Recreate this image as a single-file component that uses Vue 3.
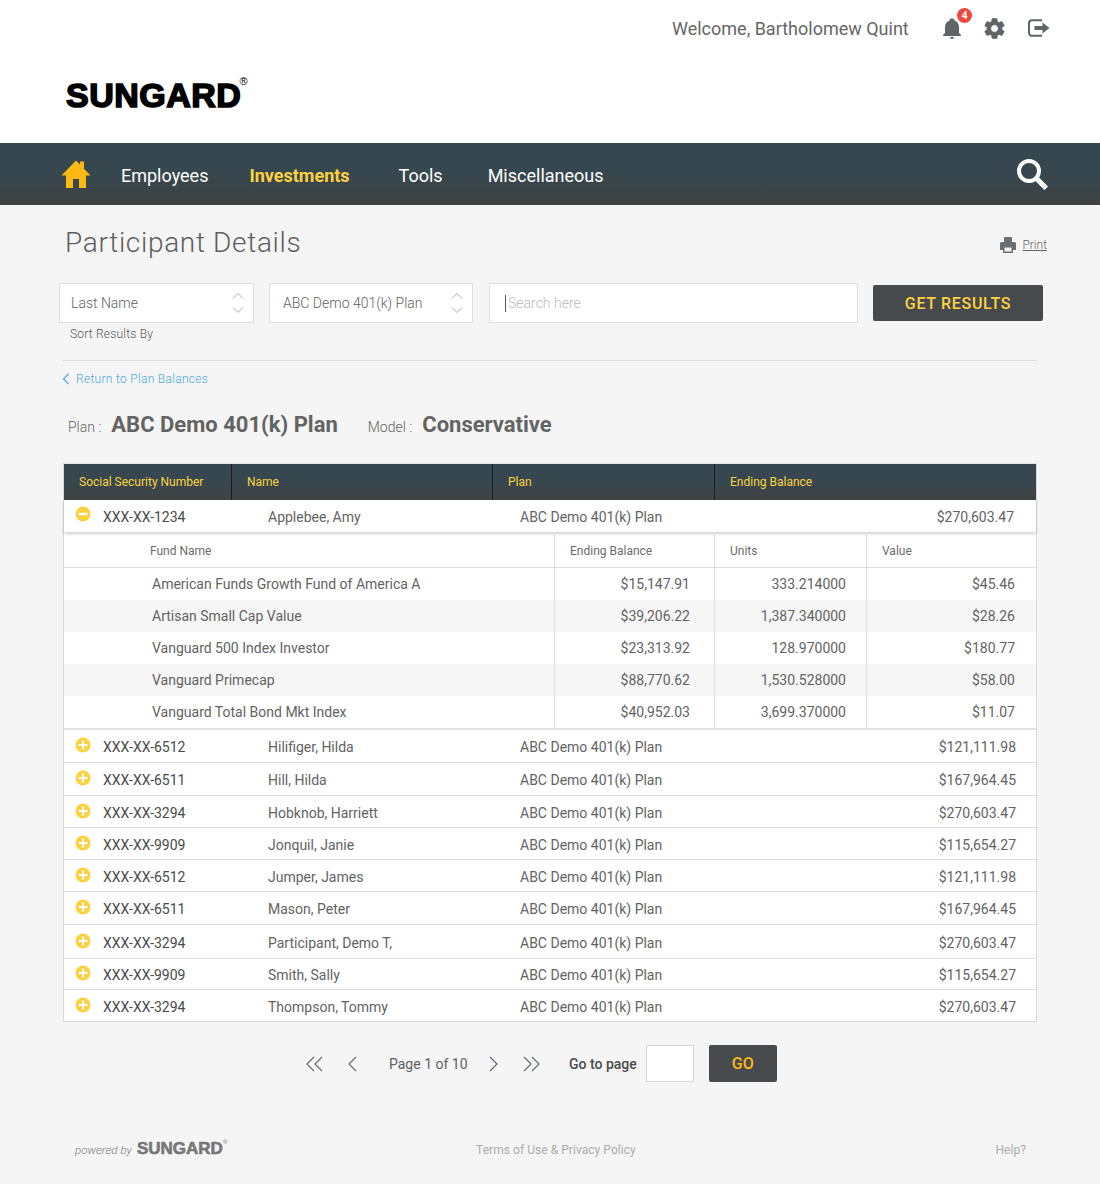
<template>
  <div class="page">
    <header class="top">
      <div class="user-bar">
        <span class="welcome">Welcome, Bartholomew Quint</span>
        <span class="bell">
          <svg width="24" height="26" viewBox="0 0 24 24"><path fill="#5f6467" d="M12 23c1.100 0 2-.9 2-2h-4c0 1.100.9 2 2 2zm7-6v-6c0-3.070-1.630-5.640-4.500-6.320V4c0-.83-.67-1.500-2.500-1.500S9.500 3.170 9.500 4v.68C6.640 5.360 5 7.920 5 11v6l-2 2v1h18v-1l-2-2z"/></svg>
          <b class="badge">4</b>
        </span>
        <svg class="gear" width="25" height="25" viewBox="0 0 24 24"><path fill="#5f6467" stroke="#5f6467" stroke-width=".6" d="M19.140 12.940c.04-.3.06-.61.06-.94 0-.32-.02-.64-.07-.94l2.030-1.580c.18-.14.23-.41.12-.61l-1.920-3.320c-.12-.22-.37-.29-.59-.22l-2.390.96c-.5-.38-1.030-.7-1.620-.94l-.36-2.540c-.04-.24-.24-.41-.48-.41h-3.840c-.24 0-.43.17-.47.41l-.36 2.540c-.59.24-1.130.57-1.620.94l-2.390-.96c-.22-.08-.47 0-.59.22L2.740 8.870c-.12.21-.08.47.12.61l2.030 1.580c-.05.3-.09.63-.09.94s.02.64.07.94l-2.030 1.580c-.18.14-.23.41-.12.61l1.920 3.320c.12.22.37.29.59.22l2.390-.96c.5.38 1.030.7 1.620.94l.36 2.540c.05.24.24.41.48.41h3.840c.24 0 .44-.17.47-.41l.36-2.540c.59-.24 1.130-.56 1.620-.94l2.390.96c.22.08.47 0 .59-.22l1.920-3.320c.12-.22.07-.47-.12-.61l-2.010-1.580zM12 15.600c-1.980 0-3.600-1.620-3.600-3.600s1.620-3.600 3.600-3.600 3.600 1.620 3.600 3.600-1.620 3.600-3.600 3.600z"/></svg>
        <svg class="exit" width="22" height="18" viewBox="0 0 22 18">
          <path fill="none" stroke="#5f6467" stroke-width="2" d="M14 1.200H4A3 3 0 0 0 1 4.200v9.600a3 3 0 0 0 3 3h10"/>
          <path fill="#5f6467" d="M6.500 7h8V3.500L21.500 9l-7 5.500V11h-8z"/>
        </svg>
      </div>
      <div class="logo">SUNGARD<sup>®</sup></div>
    </header>

    <nav class="nav">
      <svg class="home" width="30" height="30" viewBox="0 0 30 30"><path fill="#fdb913" d="M0.500 16.500 15 1.500l4 4V2.500h4V9.800l6.500 6.700H25V29h-7V20h-6v9H5V16.500z"/></svg>
      <a class="nav-link employees">Employees</a>
      <a class="nav-link active">Investments</a>
      <a class="nav-link tools">Tools</a>
      <a class="nav-link misc">Miscellaneous</a>
      <svg class="search" width="32" height="32" viewBox="0 0 32 32">
        <circle cx="13" cy="13" r="10" fill="none" stroke="#fff" stroke-width="4"/>
        <path d="M21 21 28.500 28.500" stroke="#fff" stroke-width="5" stroke-linecap="square"/>
      </svg>
    </nav>

    <main>
      <div class="title-row">
        <h1>Participant Details</h1>
        <span class="print">
          <svg width="16" height="16" viewBox="0 0 16 16">
            <path fill="#6b7074" d="M4 0h8v5h2.500A1.500 1.500 0 0 1 16 6.500V13h-3v3H3v-3H0V6.500A1.500 1.500 0 0 1 1.500 5H4z"/>
            <path fill="#f5f5f5" d="M4.500 10.500h7V14.500h-7z"/>
          </svg>
          <u>Print</u>
        </span>
      </div>

      <div class="filters">
        <div class="sort-col">
          <div class="box sel sel-a">
            <span>Last Name</span>
            <svg width="12" height="22" viewBox="0 0 12 22"><path d="M1 6.500 6 1.500l5 5M1 15.500l5 5 5-5" fill="none" stroke="#aaa" stroke-width="1"/></svg>
          </div>
          <div class="hint">Sort Results By</div>
        </div>
        <div class="box sel sel-b">
          <span>ABC Demo 401(k) Plan</span>
          <svg width="12" height="22" viewBox="0 0 12 22"><path d="M1 6.500 6 1.500l5 5M1 15.500l5 5 5-5" fill="none" stroke="#aaa" stroke-width="1"/></svg>
        </div>
        <div class="box searchbox"><i class="caret"></i><span>Search here</span></div>
        <button class="btn get">GET RESULTS</button>
      </div>

      <div class="rule"></div>

      <a class="back">
        <svg width="8" height="12" viewBox="0 0 8 12"><path d="M6.500 1 1.500 6l5 5" fill="none" stroke="#4aa8e0" stroke-width="1.200"/></svg>
        Return to Plan Balances
      </a>

      <div class="plan-line">
        <span class="lbl">Plan :</span><strong class="plan-name">ABC Demo 401(k) Plan</strong>
        <span class="lbl model">Model :</span><strong>Conservative</strong>
      </div>

      <section class="table">
        <div class="thead">
          <div v-for="h in headers" :key="h">{{ h }}</div>
        </div>

        <div class="row open">
          <svg class="toggle" width="16" height="16" viewBox="0 0 16 16"><circle cx="8" cy="8" r="7.500" fill="#fdd23e"/><rect x="3.500" y="6.800" width="9" height="2.400" fill="#fff"/></svg>
          <span class="ssn">XXX-XX-1234</span>
          <span class="name">Applebee, Amy</span>
          <span class="plan">ABC Demo 401(k) Plan</span>
          <span class="amt first">$270,603.47</span>
        </div>

        <div class="funds">
          <div class="fund-head">
            <div class="fn">Fund Name</div>
            <div>Ending Balance</div>
            <div>Units</div>
            <div>Value</div>
          </div>
          <div v-for="f in funds" :key="f.name" class="fund-row">
            <div class="fn">{{ f.name }}</div>
            <div class="num">{{ f.bal }}</div>
            <div class="num units">{{ f.units }}</div>
            <div class="num val">{{ f.val }}</div>
          </div>
        </div>

        <div v-for="r in rows" :key="r.name" class="row closed" :style="{ height: r.h + 'px' }">
          <svg class="toggle" width="16" height="16" viewBox="0 0 16 16"><circle cx="8" cy="8" r="7.500" fill="#fdd23e"/><path d="M3.500 8h9M8 3.500v9" stroke="#fff" stroke-width="2.200"/></svg>
          <span class="ssn">{{ r.ssn }}</span>
          <span class="name">{{ r.name }}</span>
          <span class="plan">ABC Demo 401(k) Plan</span>
          <span class="amt">{{ r.amt }}</span>
        </div>
      </section>

      <div class="pager">
        <svg class="p1" width="17" height="16" viewBox="0 0 17 16"><path d="M8 1 1 8l7 7M16 1 9 8l7 7" fill="none" stroke="#5d6c76" stroke-width="1.200"/></svg>
        <svg class="p2" width="9" height="16" viewBox="0 0 9 16"><path d="M8 1 1 8l7 7" fill="none" stroke="#5d6c76" stroke-width="1.200"/></svg>
        <span class="page-no">Page 1 of 10</span>
        <svg class="p3" width="9" height="16" viewBox="0 0 9 16"><path d="M1 1l7 7-7 7" fill="none" stroke="#5d6c76" stroke-width="1.200"/></svg>
        <svg class="p4" width="17" height="16" viewBox="0 0 17 16"><path d="M1 1l7 7-7 7M9 1l7 7-7 7" fill="none" stroke="#5d6c76" stroke-width="1.200"/></svg>
        <b class="goto">Go to page</b>
        <div class="page-input"></div>
        <button class="btn go">GO</button>
      </div>
    </main>

    <footer class="foot">
      <div class="powered"><em>powered by</em><span class="logo small">SUNGARD<sup>®</sup></span></div>
      <a class="terms">Terms of Use &amp; Privacy Policy</a>
      <a class="help">Help?</a>
    </footer>
  </div>
</template>

<script setup>
const headers = ['Social Security Number', 'Name', 'Plan', 'Ending Balance']

const funds = [
  { name: 'American Funds Growth Fund of America A', bal: '$15,147.91', units: '333.214000', val: '$45.46' },
  { name: 'Artisan Small Cap Value', bal: '$39,206.22', units: '1,387.340000', val: '$28.26' },
  { name: 'Vanguard 500 Index Investor', bal: '$23,313.92', units: '128.970000', val: '$180.77' },
  { name: 'Vanguard Primecap', bal: '$88,770.62', units: '1,530.528000', val: '$58.00' },
  { name: 'Vanguard Total Bond Mkt Index', bal: '$40,952.03', units: '3,699.370000', val: '$11.07' }
]

const rows = [
  { ssn: 'XXX-XX-6512', name: 'Hilifiger, Hilda', amt: '$121,111.98', h: 33 },
  { ssn: 'XXX-XX-6511', name: 'Hill, Hilda', amt: '$167,964.45', h: 33 },
  { ssn: 'XXX-XX-3294', name: 'Hobknob, Harriett', amt: '$270,603.47', h: 32 },
  { ssn: 'XXX-XX-9909', name: 'Jonquil, Janie', amt: '$115,654.27', h: 32 },
  { ssn: 'XXX-XX-6512', name: 'Jumper, James', amt: '$121,111.98', h: 32 },
  { ssn: 'XXX-XX-6511', name: 'Mason, Peter', amt: '$167,964.45', h: 33 },
  { ssn: 'XXX-XX-3294', name: 'Participant, Demo T,', amt: '$270,603.47', h: 34 },
  { ssn: 'XXX-XX-9909', name: 'Smith, Sally', amt: '$115,654.27', h: 31 },
  { ssn: 'XXX-XX-3294', name: 'Thompson, Tommy', amt: '$270,603.47', h: 31 }
]
</script>

<style>
html, body {
  margin: 0;
  background: #f5f5f5;
}
</style>

<style scoped>
.page {
  width: 1100px;
  height: 1184px;
  overflow: hidden;
  background: #f5f5f5;
  font-family: Roboto, "Liberation Sans", sans-serif;
  color: #5a5a5a;
}

.top {
  height: 143px;
  background: #fff;
  overflow: hidden;
}

.user-bar {
  display: flex;
  align-items: center;
  height: 56px;
  padding-left: 672px;
}

.welcome {
  font-size: 18px;
  color: #666;
  width: 268px;
}

.bell {
  position: relative;
  display: flex;
  width: 24px;
}

.badge {
  position: absolute;
  left: 17px;
  top: -7px;
  width: 15px;
  height: 15px;
  border-radius: 50%;
  background: #f0483e;
  color: #fff;
  font-size: 10px;
  line-height: 15px;
  text-align: center;
}

.gear {
  margin-left: 18px;
}

.exit {
  margin-left: 21px;
  margin-top: -1px;
}

.logo {
  font-family: "Liberation Sans", Arial, sans-serif;
  font-weight: 700;
  font-size: 34px;
  line-height: 34px;
  color: #000;
  -webkit-text-stroke: 1.6px #000;
  letter-spacing: .5px;
  margin: 22px 0 0 66px;
  white-space: nowrap;
}

.logo sup {
  margin-left: -2px;
  font-size: 11px;
  font-weight: 400;
  -webkit-text-stroke: 0;
  vertical-align: 22px;
  line-height: 0;
}

.nav {
  display: flex;
  align-items: center;
  height: 62px;
  padding-left: 61px;
  background: linear-gradient(#37474f 0%, #37474f 50%, #414141 100%);
  color: #fff;
  font-size: 18px;
}

.nav-link {
  white-space: nowrap;
  padding-top: 2px;
}

.employees {
  margin-left: 30px;
}

.active {
  margin-left: 41px;
  font-weight: 700;
  color: #fdd23e;
}

.tools {
  margin-left: 49px;
}

.misc {
  margin-left: 45px;
}

.search {
  margin-left: auto;
  margin-right: 52px;
}

.title-row {
  display: flex;
  align-items: center;
  justify-content: space-between;
  height: 34px;
  margin-top: 20px;
  padding: 0 53px 0 65px;
}

h1 {
  margin: 0;
  font-size: 28px;
  font-weight: 300;
  letter-spacing: .67px;
  color: #5e5e5e;
}

.print {
  display: flex;
  align-items: center;
  gap: 6px;
  font-size: 12px;
  font-weight: 300;
  color: #666;
  margin-top: 5px;
}

.filters {
  display: flex;
  align-items: flex-start;
  margin-top: 24px;
  padding-left: 59px;
}

.box {
  box-sizing: border-box;
  height: 40px;
  background: #fff;
  border: 1px solid #dedede;
  display: flex;
  align-items: center;
  font-size: 14px;
  font-weight: 300;
  color: #5f5f5f;
}

.sel {
  justify-content: space-between;
  padding-right: 9px;
}

.sel-a {
  width: 195px;
  padding-left: 11px;
}

.sel-b {
  width: 204px;
  margin-left: 15px;
  padding-left: 13px;
}

.hint {
  font-size: 12px;
  font-weight: 300;
  letter-spacing: .2px;
  color: #555;
  padding: 4px 0 0 11px;
  line-height: 15px;
}

.sort-col {
  height: 62px;
}

.searchbox {
  width: 369px;
  margin-left: 16px;
  padding-left: 15px;
  color: #bbb;
}

.caret {
  width: 1px;
  height: 17px;
  background: #555;
  margin-right: 2px;
}

.btn {
  border: 0;
  border-radius: 2px;
  background: #474a4d;
  font-family: inherit;
  font-weight: 500;
  font-size: 16px;
  color: #fdd23e;
  padding: 0;
}

.get {
  width: 170px;
  height: 36px;
  margin: 2px 0 0 15px;
  letter-spacing: .7px;
}

.rule {
  height: 1px;
  margin: 15px 63px 0;
  background: #dcdcdc;
}

.back {
  display: flex;
  align-items: center;
  gap: 6px;
  height: 16px;
  margin: 10px 0 0 62px;
  font-size: 12px;
  font-weight: 300;
  letter-spacing: .3px;
  color: #4aa8e0;
}

.plan-line {
  display: flex;
  align-items: baseline;
  height: 28px;
  margin-top: 25px;
  padding-left: 68px;
  font-size: 22px;
  color: #636363;
}

.plan-line strong {
  font-weight: 700;
}

.lbl {
  font-size: 14px;
  font-weight: 300;
  margin-right: 10px;
}

.plan-name {
  margin-right: 30px;
}

.table {
  box-sizing: border-box;
  width: 974px;
  margin: 23px 0 0 63px;
  background: #fff;
  border: 1px solid #d4d8db;
  border-top-color: #e2e4e6;
}

.thead {
  display: grid;
  grid-template-columns: 167px 261px 222px 1fr;
  height: 36px;
  background: linear-gradient(#37474f 0%, #37474f 50%, #414141 100%);
  color: #fdd23e;
  font-size: 12px;
}

.thead div {
  display: flex;
  align-items: center;
  padding-left: 15px;
  border-left: 1px solid #1c1c1c;
}

.thead div:first-child {
  border-left: 0;
}

.row {
  position: relative;
  box-sizing: border-box;
  display: flex;
  align-items: center;
  padding-top: 2px;
  font-size: 14px;
  color: #636363;
  background: #fff;
}

.open {
  height: 32px;
  box-shadow: 0 2px 3px rgba(0, 0, 0, .18);
  z-index: 1;
}

.closed {
  border-bottom: 1px solid #dcdfe2;
}

.closed:last-child {
  border-bottom: 0;
}

.toggle {
  position: absolute;
  left: 11px;
  top: 6px;
}

.closed .toggle {
  top: calc(50% - 9px);
}

.ssn {
  margin-left: 39px;
  width: 165px;
  color: #4a4a4a;
}

.name {
  width: 252px;
}

.amt {
  margin-left: auto;
  margin-right: 20px;
}

.amt.first {
  margin-right: 22px;
}

.funds {
  padding-top: 3px;
  border-bottom: 2px solid #dfe1e3;
}

.fund-head,
.fund-row {
  display: grid;
  grid-template-columns: 490px 160px 152px 1fr;
}

.fund-head {
  height: 32px;
  border-bottom: 1px solid #dcdfe2;
  font-size: 12px;
  color: #6b6b6b;
}

.fund-head div {
  display: flex;
  align-items: center;
  padding-left: 15px;
  border-left: 1px solid #dcdfe2;
}

.fund-row {
  height: 32px;
  font-size: 14px;
  color: #636363;
}

.fund-row:nth-child(odd) {
  background: #f6f6f6;
}

.fund-row div {
  display: flex;
  align-items: center;
  border-left: 1px solid #dcdfe2;
}

.fund-head .fn {
  border-left: 0;
  padding-left: 86px;
}

.fund-row .fn {
  border-left: 0;
  padding-left: 88px;
}

.num {
  justify-content: flex-end;
  padding-right: 24px;
}

.units {
  padding-right: 20px;
}

.val {
  padding-right: 21px;
}

.pager {
  display: flex;
  align-items: center;
  height: 37px;
  margin-top: 23px;
  padding-left: 306px;
  font-size: 14px;
}

.p2 {
  margin-left: 25px;
}

.page-no {
  margin-left: 32px;
  color: #5f5f5f;
  width: 78px;
  white-space: nowrap;
}

.p3 {
  margin-left: 22px;
}

.p4 {
  margin-left: 25px;
}

.goto {
  margin-left: 29px;
  font-weight: 500;
  color: #4a4a4a;
  white-space: nowrap;
}

.page-input {
  box-sizing: border-box;
  width: 48px;
  height: 37px;
  margin-left: 9px;
  background: #fff;
  border: 1px solid #d4d4d4;
}

.go {
  width: 68px;
  height: 37px;
  margin-left: 15px;
  color: #fdb913;
}

.foot {
  position: relative;
  display: flex;
  align-items: center;
  height: 20px;
  margin-top: 58px;
  font-size: 12px;
  letter-spacing: .05px;
  color: #ababab;
}

.powered {
  display: flex;
  align-items: center;
  margin-left: 75px;
  width: 401px;
}

.powered em {
  font-size: 11.500px;
  font-weight: 300;
  color: #777;
  margin-right: 5px;
}

.logo.small {
  font-size: 17px;
  line-height: 20px;
  letter-spacing: 0;
  margin: -3px 0 0;
  color: #777;
  -webkit-text-stroke: .6px #777;
}

.logo.small sup {
  margin-left: 0;
  font-size: 6px;
  vertical-align: 10px;
}

.terms {
  white-space: nowrap;
}

.help {
  margin-left: auto;
  margin-right: 74px;
}
</style>
